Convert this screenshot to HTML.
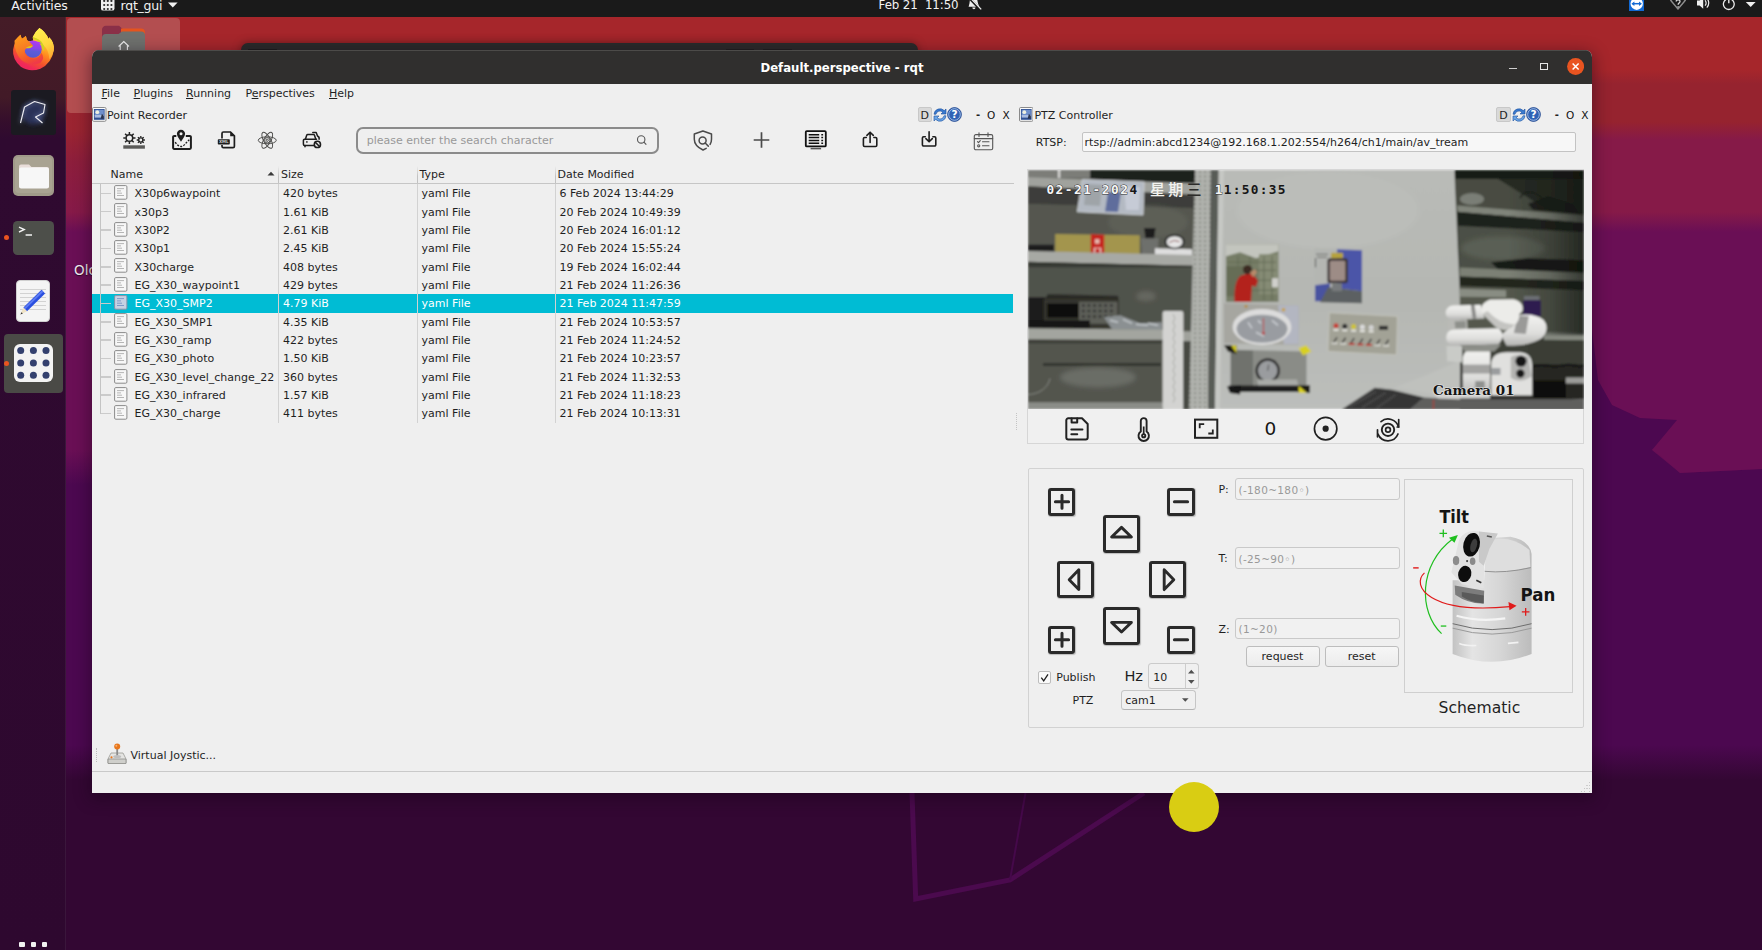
<!DOCTYPE html>
<html><head><meta charset="utf-8"><title>Default.perspective - rqt</title>
<style>
*{box-sizing:border-box;margin:0;padding:0}
html,body{width:1762px;height:950px;overflow:hidden;background:#330733}
body{position:relative;font-family:"DejaVu Sans","Liberation Sans",sans-serif;font-size:11px;color:#1f1f1f}
body div,body span,body svg{position:absolute}
.t{white-space:pre;line-height:14px;height:14px}
#wall{left:0;top:0;width:1762px;height:950px;
 background:linear-gradient(180deg,#a6262b 0px,#a6262b 70px,#96232f 84px,#96232f 122px,#861a48 140px,#861a48 212px,#6a0f55 232px,#6a0f55 450px,#4c0850 485px,#4c0850 745px,#330733 780px,#330733 950px)}
#topbar{left:0;top:0;width:1762px;height:16.6px;background:#1a1a1a;color:#f4f4f4;overflow:hidden}
#dock{left:0;top:16.6px;width:66px;height:934px;background:linear-gradient(180deg,#451c27 0,#421a27 80px,#350e2c 104px,#2f0a30 122px,#2e082f 100%)}
#win{left:92px;top:50px;width:1500px;height:743px;background:#efefef;border-radius:7px 7px 0 0;overflow:hidden}
#titlebar{left:0;top:0;width:1500px;height:33.8px;background:#302f2e;border-top:1px solid #4c4b49}
.hl{background:#00bcd4}
.inp{background:#f7f7f7;border:1px solid #c3c3c3;border-radius:2px}
.btn{background:linear-gradient(#f6f6f6,#ececec);border:1px solid #bdbdbd;border-radius:3px;text-align:center}
.ph{color:#999}
.kb{border:3px solid #2a2a2a;border-radius:3px;box-shadow:.5px .8px 1px rgba(0,0,0,.22)}
</style></head><body>
<div id="wall"></div>
<!-- left strip -->
<div style="left:66px;top:100px;width:30px;height:110px;background:linear-gradient(180deg,#9d2430 0,#9b2431 30px,#8d1e3c 62px,rgba(134,26,72,0) 110px)"></div>
<!-- right wallpaper facets -->
<svg style="left:1592px;top:330px" width="170" height="160" viewBox="0 0 170 160"><polygon points="0,0 6,50 20,75 48,88 85,90 60,120 88,143 170,139 170,160 0,160" fill="#4c0850"/><polygon points="60,119 170,119 170,139 88,143" fill="#6a0f55"/></svg>
<!-- desktop icon highlight + folder -->
<div style="left:66.800px;top:18px;width:113px;height:95.300px;background:#b34e50;border-radius:4px"></div>
<svg style="left:100px;top:24px" width="48" height="30" viewBox="0 0 48 30"><path d="M2 6a4 4 0 0 1 4-4.200h13l4 3.500H23V30H2z" fill="#8a3048"/><path d="M21 4.500h20a4 4 0 0 1 4 4V30H21z" fill="#e5541e"/><path d="M2 14a4 4 0 0 1 4-4h12.500l3.500-2.500H41a4 4 0 0 1 4 4V30H2z" fill="#6f716e"/><path d="M18.600 22.500l5.200-5 5.200 5M20.200 21.500V27M27.400 21.500V27" stroke="#f0f0f0" stroke-width="1.100" fill="none"/></svg>
<span class="t" style="left:74px;top:262px;font-size:13.500px;line-height:17px;height:17px;color:#f1eaf0;text-shadow:0 1px 1px rgba(0,0,0,.6)">Olc</span>
<!-- window behind -->
<div style="left:240.500px;top:42.800px;width:677px;height:20px;background:#2a2a2a;border-radius:7px 7px 0 0;box-shadow:0 0 10px rgba(0,0,0,.35)"></div>
<div style="left:248px;top:48.500px;width:29px;height:3px;background:#1d1d1d"></div>
<div style="left:726px;top:48.500px;width:28px;height:3px;background:#1f1f1f"></div>
<div style="left:763px;top:48.500px;width:29px;height:3px;background:#1f1f1f"></div>
<!-- wallpaper figure lines -->
<svg style="left:880px;top:780px" width="300" height="140" viewBox="0 0 300 140"><path d="M32 13L35.700 119 130 100 264 13" fill="none" stroke="#4b0a4e" stroke-width="5" stroke-linejoin="miter"/><path d="M145.500 13L130 100" stroke="#45094a" stroke-width="2" fill="none"/></svg>
<!-- window shadow -->
<div style="left:92px;top:50px;width:1500px;height:743px;border-radius:7px 7px 0 0;box-shadow:0 4px 16px 2px rgba(20,0,20,.42)"></div>

<div id="topbar"><span class="t" style="left:11.3px;top:-2.400px;font-size:12.5px;line-height:16px;height:16px;color:#f2f2f2;letter-spacing:-.05px">Activities</span>
<svg style="left:101px;top:-3px" width="14" height="14" viewBox="0 0 14 14"><rect x="0" y="0" width="13.5" height="13.6" rx="2.2" fill="#f0f0f0"/><g fill="#2a2a2a"><circle cx="3.2" cy="4" r="1.1"/><circle cx="6.8" cy="4" r="1.1"/><circle cx="10.4" cy="4" r="1.1"/><circle cx="3.2" cy="8" r="1.1"/><circle cx="6.8" cy="8" r="1.1"/><circle cx="10.4" cy="8" r="1.1"/><circle cx="3.2" cy="12" r="1.1"/><circle cx="6.8" cy="12" r="1.1"/><circle cx="10.4" cy="12" r="1.1"/></g></svg>
<span class="t" style="left:120.6px;top:-2.400px;font-size:12.5px;line-height:16px;height:16px;color:#f2f2f2;letter-spacing:-.25px">rqt_gui</span>
<svg style="left:167px;top:1px" width="12" height="8" viewBox="0 0 12 8"><path d="M1 1.400h9.600L5.800 6.600z" fill="#f0f0f0"/></svg>
<span class="t" style="left:878.6px;top:-3px;font-size:11.800px;line-height:16px;height:16px;color:#f2f2f2;letter-spacing:-.1px">Feb 21  11:50</span>
<svg style="left:966px;top:-3px" width="17" height="15" viewBox="0 0 17 15"><path d="M4.200 0h6.500c.6 3 1 6.500 2.600 9.800H2.600C3.800 6.500 3.800 3 4.200 0z" fill="#eeeeee"/><path d="M6.300 10.600a1.600 1.600 0 0 0 3.200 0z" fill="#eee"/><path d="M2.500 0l12 12.800" stroke="#1a1a1a" stroke-width="2.600"/><path d="M3.600 0l11.600 12.400" stroke="#eee" stroke-width="1.300"/></svg>
<!-- tray -->
<svg style="left:1629px;top:-4px" width="15.400" height="15.400" viewBox="0 0 15.400 15.400"><rect width="15.400" height="15.400" fill="#1269d3"/><circle cx="7.700" cy="7.700" r="6.200" fill="#fff"/><path d="M3.600 7.700h8.200" stroke="#1269d3" stroke-width="1.500" fill="none"/><path d="M2.400 7.700l3-2.300v4.600zM13 7.700l-3-2.300v4.600z" fill="#1269d3"/></svg>
<svg style="left:1669px;top:-5px" width="18" height="15" viewBox="0 0 18 15"><path d="M9 14L1.800 5.500C5.500 1.500 12.500 1.500 16.200 5.500z" fill="none" stroke="#8e8e8e" stroke-width="1.400"/><path d="M7.200 6.600c0-2.400 3.800-2.400 3.800-.2 0 1.600-1.900 1.600-1.900 3.300M9.100 11.300v1.300" stroke="#d8d8d8" stroke-width="1.300" fill="none"/></svg>
<svg style="left:1695px;top:-4px" width="17" height="14" viewBox="0 0 17 14"><path d="M2 4.600h2.600L8.200 1.200v11.600L4.600 9.400H2z" fill="#f0f0f0"/><path d="M10 4.300c1.500 1.500 1.500 3.900 0 5.400M11.800 2.400c2.600 2.600 2.600 6.600 0 9.200" stroke="#f0f0f0" stroke-width="1.200" fill="none"/></svg>
<svg style="left:1721px;top:-4px" width="16" height="15" viewBox="0 0 16 15"><path d="M5 3.500a5.400 5.400 0 1 0 5.600 0" stroke="#ededed" stroke-width="1.300" fill="none"/><path d="M7.800 0v7.200" stroke="#ededed" stroke-width="1.400"/></svg>
<svg style="left:1745px;top:1px" width="12" height="8" viewBox="0 0 12 8"><path d="M.800 .900h9.800L5.700 6.100z" fill="#f0f0f0"/></svg>
</div>
<div id="dock"><div style="left:65.300px;top:0;width:1px;height:934px;background:rgba(255,255,255,.06)"></div>
<!-- firefox -->
<svg style="left:10px;top:8.400px" width="48" height="48" viewBox="0 0 48 48">
<defs><linearGradient id="ffb" x1=".75" y1=".05" x2=".3" y2="1"><stop offset="0" stop-color="#ffe94a"/><stop offset=".28" stop-color="#ffc230"/><stop offset=".5" stop-color="#ff8a1f"/><stop offset=".72" stop-color="#f4502e"/><stop offset=".9" stop-color="#f0285a"/></linearGradient>
<linearGradient id="ffg" x1=".5" y1="0" x2=".4" y2="1"><stop offset="0" stop-color="#b03af2"/><stop offset=".45" stop-color="#8a44ea"/><stop offset=".6" stop-color="#5e5cd8"/><stop offset="1" stop-color="#5558d2"/></linearGradient>
<linearGradient id="ffs" x1=".2" y1="0" x2=".6" y2="1"><stop offset="0" stop-color="#ff9c1a"/><stop offset=".45" stop-color="#f77a25"/><stop offset=".8" stop-color="#f2552c"/><stop offset="1" stop-color="#f03a48"/></linearGradient>
<linearGradient id="fff" x1=".3" y1="0" x2=".7" y2="1"><stop offset="0" stop-color="#fff04f"/><stop offset=".6" stop-color="#ffd53e"/><stop offset="1" stop-color="#ffa834"/></linearGradient></defs>
<path d="M10.48 9.85Q4.48 15.85 3.09 24.69Q2.26 34.17 10.79 41.75Q19.64 47.43 30.38 43.64Q41.75 38.59 43.77 25.32Q44.59 17.74 39.22 12.37L38.59 13.95Q35.43 6.37 29.43 2.90Q25.32 6.37 22.80 12.06L23.11 15.85L17.11 16.16L16.79 14.27L15.85 11.11L13.00 13.45L11.74 13.64Z" fill="url(#ffb)"/>
<path d="M29.43 2.90Q35.43 6.37 38.59 13.95L39.22 12.37Q44.59 17.74 43.77 25.32Q43.01 30.38 39.22 34.17Q39.22 25.32 33.53 20.27Q30.38 15.85 22.80 12.06Q25.32 6.37 29.43 2.90Z" fill="url(#fff)"/>
<path d="M22.80 12.06Q30.38 13.95 32.90 19.01Q35.43 22.16 33.53 26.59Q31.64 21.53 30.38 19.01Q27.85 15.21 22.80 13.32Z" fill="#cfd420"/>
<circle cx="23.11" cy="24.19" r="8.600" fill="url(#ffg)"/>
<path d="M4.48 15.85Q7.63 12.06 10.48 9.85L11.74 13.64L15.85 11.11L16.79 14.58Q20.27 17.74 23.11 20.58Q22.16 22.80 17.11 23.11Q13.95 24.69 14.27 27.85Q15.85 32.90 23.43 33.66Q29.11 33.53 31.32 27.85Q35.43 32.90 30.38 37.96Q21.53 41.75 12.06 35.43Q4.48 29.11 4.48 15.85Z" fill="url(#ffs)"/>
<path d="M15.85 22.80Q20.27 20.27 22.80 20.90Q21.53 23.11 17.11 23.30Z" fill="#d8cc1c"/>
<path d="M27.22 16.48Q30.38 17.11 31.32 18.69Q29.43 18.06 27.85 18.69Z" fill="#b03af2"/>
</svg>
<!-- R icon -->
<div style="left:11px;top:73.400px;width:44.800px;height:44.600px;background:#1b1a21;border-radius:3px"></div>
<svg style="left:11px;top:73.400px" width="45" height="45" viewBox="0 0 45 45"><defs><filter id="gl" x="-30%" y="-30%" width="160%" height="160%"><feGaussianBlur stdDeviation="2.200"/></filter></defs><circle cx="22.500" cy="23" r="11.500" fill="#2c3358" filter="url(#gl)"/><path d="M9.500 33L13.500 17 23.500 11.500 34 14.500 32.500 23 24.500 27 31.500 33" fill="none" stroke="#8e9fd0" stroke-width="2.600" opacity=".4" filter="url(#gl)"/><path d="M9.500 33L13.500 17 23.500 11.500 34 14.500 32.500 23 24.500 27 31.500 33" fill="none" stroke="#ededf2" stroke-width="1.150" stroke-linejoin="round"/></svg>
<!-- files -->
<div style="left:12.600px;top:138.400px;width:41.800px;height:41.200px;background:#a09a89;border-radius:5px"></div>
<div style="left:14.600px;top:140.400px;width:37.800px;height:36px;background:#a9a392;border-radius:4px"></div>
<svg style="left:12.600px;top:138.400px" width="42" height="42" viewBox="0 0 42 42"><path d="M6 11.500a2 2 0 0 1 2-2h8l2.500 2.500H34a2 2 0 0 1 2 2V31a2 2 0 0 1-2 2H8a2 2 0 0 1-2-2z" fill="#e9ddd9"/><rect x="6" y="12.600" width="30" height="20.800" rx="2.200" fill="#f7f7f7"/></svg>
<!-- terminal -->
<div style="left:12.600px;top:204.400px;width:41.200px;height:34.200px;background:#4d4f4a;border-radius:4.500px"></div>
<svg style="left:12.600px;top:204.400px" width="42" height="35" viewBox="0 0 42 35"><path d="M6 6.200l5.200 2.400L6 11" stroke="#f4f4f4" stroke-width="1.400" fill="none"/><path d="M12.600 14h6.400" stroke="#f4f4f4" stroke-width="1.500"/></svg>
<div style="left:3.800px;top:218.800px;width:5px;height:5px;border-radius:50%;background:#e95420"></div>
<!-- text editor -->
<div style="left:16.400px;top:263.400px;width:33.800px;height:41.700px;background:#f4f4f4;border-radius:4px;border:.5px solid #cfcfcf"></div>
<svg style="left:16.400px;top:263.400px" width="34" height="42" viewBox="0 0 34 42"><path d="M4 9.500h26M4 13.500h26M4 17.500h26M4 21.500h26M4 25.500h26M4 29.500h26" stroke="#c9c9c9" stroke-width=".8"/><path d="M25.500 9.800l3.600 3.600L11 31.200l-3.600-3.600z" fill="#2a4fe0"/><path d="M26 10.300l1.400 1.400L9 29.600l-1.200-1.500z" fill="#5b7bf2"/><path d="M7.400 27.600l3.600 3.600-6.600 3.200z" fill="#efe2c4"/><path d="M5.500 32.200l1.400 1.300-2.500 1.100z" fill="#333"/></svg>
<!-- active app -->
<div style="left:3.600px;top:317.100px;width:59.200px;height:59px;background:#4a4a46;border-radius:4px"></div>
<div style="left:13.700px;top:327px;width:39.400px;height:38.600px;background:#f3f3f3;border-radius:6px"></div>
<svg style="left:13.700px;top:327px" width="40" height="39" viewBox="0 0 40 39"><g fill="#33406e"><circle cx="6.700" cy="6.500" r="3.500"/><circle cx="19.400" cy="6.500" r="3.500"/><circle cx="32" cy="6.500" r="3.500"/><circle cx="6.700" cy="18.900" r="3.500"/><circle cx="19.400" cy="18.900" r="3.500"/><circle cx="32" cy="18.900" r="3.500"/><circle cx="6.700" cy="31.200" r="3.500"/><circle cx="19.400" cy="31.200" r="3.500"/><circle cx="32" cy="31.200" r="3.500"/></g></svg>
<div style="left:3.800px;top:344.200px;width:5px;height:5px;border-radius:50%;background:#e95420"></div>
<!-- show apps -->
<div style="left:19.400px;top:925.200px;width:5.200px;height:5.200px;border-radius:1px;background:#f2f2f2"></div>
<div style="left:30.500px;top:925.200px;width:5.200px;height:5.200px;border-radius:1px;background:#f2f2f2"></div>
<div style="left:41.500px;top:925.200px;width:5.200px;height:5.200px;border-radius:1px;background:#f2f2f2"></div>
</div>
<div id="win"><div id="titlebar"></div></div>
<!-- window chrome -->
<span class="t" style="left:760px;top:61px;width:164px;text-align:center;color:#fff;font-weight:bold;font-size:11.7px">Default.perspective - rqt</span>
<div style="left:1509px;top:68px;width:8.2px;height:1.4px;background:#cfcfcf"></div>
<div style="left:1540.4px;top:62.9px;width:7.8px;height:7.6px;border:1.3px solid #e6e6e6"></div>
<svg style="left:1567px;top:58px" width="17" height="17" viewBox="0 0 17 17"><circle cx="8.6" cy="8.5" r="8.5" fill="#e95420"/><path d="M5.6 5.5l6 6M11.6 5.5l-6 6" stroke="#fff" stroke-width="1.5" fill="none"/></svg>
<!-- menubar -->
<span class="t" style="left:101.5px;top:86.8px"><u>F</u>ile</span>
<span class="t" style="left:133.6px;top:86.8px"><u>P</u>lugins</span>
<span class="t" style="left:186px;top:86.8px"><u>R</u>unning</span>
<span class="t" style="left:245.4px;top:86.8px">P<u>e</u>rspectives</span>
<span class="t" style="left:329px;top:86.8px"><u>H</u>elp</span>
<!-- bottom -->
<div style="left:92px;top:771px;width:1500px;height:1px;background:#c9c9c9"></div>
<span class="t" style="left:130.5px;top:749.2px">Virtual Joystic...</span>
<svg style="left:1578px;top:780px" width="14" height="13" viewBox="0 0 14 13"><g fill="#c6c6c6"><rect x="11" y="2" width="1" height="1"/><rect x="8.200" y="5" width="1.600" height="1"/><rect x="11" y="5" width="1" height="1"/><rect x="6" y="8" width="1" height="1"/><rect x="8.200" y="8" width="1.600" height="1"/><rect x="11" y="8" width="1" height="1"/><rect x="3" y="11" width="1" height="1"/><rect x="6" y="11" width="1" height="1"/><rect x="11" y="11" width="1" height="1"/></g></svg>

<!-- Point Recorder dock title -->
<svg style="left:92.300px;top:107.200px" width="14.500" height="14.800" viewBox="0 0 14.500 14.800"><rect x=".5" y=".5" width="13.500" height="13.800" rx="1.200" fill="#fbfbfb" stroke="#8a8a8a"/><rect x="1.900" y="2" width="10.700" height="10.800" fill="#2f4f93"/><rect x="2.700" y="2.800" width="9.100" height="6.200" fill="#6f8fcb"/><circle cx="5.300" cy="5.200" r="1.900" fill="#eef0e0"/><rect x="2.700" y="8" width="9.100" height="2.600" fill="#a9bce0"/><path d="M8.600 11.800l1.300-5 1.900 2.200v2.800z" fill="#2b3550"/></svg>
<span class="t" style="left:107px;top:109px">Point Recorder</span>
<div style="left:917.5px;top:107.3px;width:14.3px;height:14.6px;background:#d9d9d9;border:1px solid #c8c8c8;border-radius:2px"></div>
<span class="t" style="left:920.5px;top:109px;color:#222">D</span>
<svg style="left:933.0px;top:107.5px" width="14" height="14" viewBox="0 0 14 14"><path d="M1 6.2A6 6 0 0 1 11.3 2.6L13 1v5H8l1.8-1.8A4 4 0 0 0 3 6.2z" fill="#3a7bd0" stroke="#1c4f9c" stroke-width=".6"/><path d="M13 7.8A6 6 0 0 1 2.7 11.4L1 13V8h5L4.2 9.8A4 4 0 0 0 11 7.8z" fill="#6aa6e8" stroke="#1c4f9c" stroke-width=".6"/></svg>
<svg style="left:946.8px;top:107.2px" width="15" height="15" viewBox="0 0 15 15"><circle cx="7.5" cy="7.5" r="6.9" fill="#2f62b5" stroke="#1d428a" stroke-width=".8"/><circle cx="7.5" cy="7.5" r="5.8" fill="none" stroke="#cfe0f7" stroke-width=".7"/><text x="7.5" y="11.3" font-size="10.5" font-weight="bold" fill="#fff" text-anchor="middle" font-family="DejaVu Sans,Liberation Sans,sans-serif">?</text></svg>
<span class="t" style="left:976.0px;top:108.400px;font-weight:bold;font-size:10px;color:#222">-</span>
<span class="t" style="left:987.1px;top:108.400px;font-size:10.5px;color:#111">O</span>
<span class="t" style="left:1002.5px;top:108.400px;font-size:10.5px;color:#111">X</span>
<div style="left:355.6px;top:126.7px;width:303.8px;height:27px;border:2px solid #8b8b8b;border-radius:7px;background:#efefef"></div>
<span class="t ph" style="left:366.7px;top:134.2px">please enter the search character</span>
<svg style="left:636px;top:134px" width="12" height="12" viewBox="0 0 12 12"><circle cx="5.2" cy="5.4" r="3.7" fill="none" stroke="#555" stroke-width="1.1"/><path d="M7.9 8.2l2.4 2.4" stroke="#555" stroke-width="1.2"/></svg>
<span class="t" style="left:110.6px;top:168px">Name</span>
<span class="t" style="left:281px;top:168px">Size</span>
<span class="t" style="left:419.6px;top:168px">Type</span>
<span class="t" style="left:557.6px;top:168px">Date Modified</span>
<svg style="left:267px;top:171px" width="8" height="5" viewBox="0 0 8 5"><path d="M0.5 4.5L4 0.8 7.5 4.5z" fill="#3a3a3a"/></svg>
<div style="left:92px;top:182.6px;width:921.5px;height:1px;background:#c6c6c6"></div>
<div style="left:278.4px;top:166px;width:1px;height:17px;background:linear-gradient(#efefef,#c2c2c2 60%)"></div>
<div style="left:417px;top:166px;width:1px;height:17px;background:linear-gradient(#efefef,#c2c2c2 60%)"></div>
<div style="left:555.4px;top:166px;width:1px;height:17px;background:linear-gradient(#efefef,#c2c2c2 60%)"></div>
<div class="hl" style="left:92px;top:294.20px;width:921.3px;height:18.35px"></div>
<div style="left:278.4px;top:183.5px;width:1px;height:239.6px;background:#d2d2d2"></div>
<div style="left:417px;top:183.5px;width:1px;height:239.6px;background:#d2d2d2"></div>
<div style="left:555.4px;top:183.5px;width:1px;height:239.6px;background:#d2d2d2"></div>
<div style="left:100.200px;top:184px;width:1px;height:229.7px;background:#c4c4c4"></div>
<div style="left:100.700px;top:192.60px;width:10px;height:1.500px;background:#cbcbcb"></div>
<svg style="left:114px;top:185.00px" width="14" height="15" viewBox="0 0 14 15"><rect x=".6" y=".6" width="12.3" height="13.6" rx="1.2" fill="#f7f7f7" stroke="#8a8a8a" stroke-width="1"/><path d="M3 3.6h7M3 5.9h4M3 8.2h5M3 10.5h7" stroke="#b5b5b5" stroke-width="1"/></svg>
<span class="t" style="left:134.6px;top:187.20px">X30p6waypoint</span>
<span class="t" style="left:283px;top:187.20px">420 bytes</span>
<span class="t" style="left:421.6px;top:187.20px">yaml File</span>
<span class="t" style="left:559.4px;top:187.20px">6 Feb 2024 13:44:29</span>
<div style="left:100.700px;top:210.95px;width:10px;height:1.500px;background:#cbcbcb"></div>
<svg style="left:114px;top:203.35px" width="14" height="15" viewBox="0 0 14 15"><rect x=".6" y=".6" width="12.3" height="13.6" rx="1.2" fill="#f7f7f7" stroke="#8a8a8a" stroke-width="1"/><path d="M3 3.6h7M3 5.9h4M3 8.2h5M3 10.5h7" stroke="#b5b5b5" stroke-width="1"/></svg>
<span class="t" style="left:134.6px;top:205.55px">x30p3</span>
<span class="t" style="left:283px;top:205.55px">1.61 KiB</span>
<span class="t" style="left:421.6px;top:205.55px">yaml File</span>
<span class="t" style="left:559.4px;top:205.55px">20 Feb 2024 10:49:39</span>
<div style="left:100.700px;top:229.30px;width:10px;height:1.500px;background:#cbcbcb"></div>
<svg style="left:114px;top:221.70px" width="14" height="15" viewBox="0 0 14 15"><rect x=".6" y=".6" width="12.3" height="13.6" rx="1.2" fill="#f7f7f7" stroke="#8a8a8a" stroke-width="1"/><path d="M3 3.6h7M3 5.9h4M3 8.2h5M3 10.5h7" stroke="#b5b5b5" stroke-width="1"/></svg>
<span class="t" style="left:134.6px;top:223.90px">X30P2</span>
<span class="t" style="left:283px;top:223.90px">2.61 KiB</span>
<span class="t" style="left:421.6px;top:223.90px">yaml File</span>
<span class="t" style="left:559.4px;top:223.90px">20 Feb 2024 16:01:12</span>
<div style="left:100.700px;top:247.65px;width:10px;height:1.500px;background:#cbcbcb"></div>
<svg style="left:114px;top:240.05px" width="14" height="15" viewBox="0 0 14 15"><rect x=".6" y=".6" width="12.3" height="13.6" rx="1.2" fill="#f7f7f7" stroke="#8a8a8a" stroke-width="1"/><path d="M3 3.6h7M3 5.9h4M3 8.2h5M3 10.5h7" stroke="#b5b5b5" stroke-width="1"/></svg>
<span class="t" style="left:134.6px;top:242.25px">X30p1</span>
<span class="t" style="left:283px;top:242.25px">2.45 KiB</span>
<span class="t" style="left:421.6px;top:242.25px">yaml File</span>
<span class="t" style="left:559.4px;top:242.25px">20 Feb 2024 15:55:24</span>
<div style="left:100.700px;top:266.00px;width:10px;height:1.500px;background:#cbcbcb"></div>
<svg style="left:114px;top:258.40px" width="14" height="15" viewBox="0 0 14 15"><rect x=".6" y=".6" width="12.3" height="13.6" rx="1.2" fill="#f7f7f7" stroke="#8a8a8a" stroke-width="1"/><path d="M3 3.6h7M3 5.9h4M3 8.2h5M3 10.5h7" stroke="#b5b5b5" stroke-width="1"/></svg>
<span class="t" style="left:134.6px;top:260.60px">X30charge</span>
<span class="t" style="left:283px;top:260.60px">408 bytes</span>
<span class="t" style="left:421.6px;top:260.60px">yaml File</span>
<span class="t" style="left:559.4px;top:260.60px">19 Feb 2024 16:02:44</span>
<div style="left:100.700px;top:284.35px;width:10px;height:1.500px;background:#cbcbcb"></div>
<svg style="left:114px;top:276.75px" width="14" height="15" viewBox="0 0 14 15"><rect x=".6" y=".6" width="12.3" height="13.6" rx="1.2" fill="#f7f7f7" stroke="#8a8a8a" stroke-width="1"/><path d="M3 3.6h7M3 5.9h4M3 8.2h5M3 10.5h7" stroke="#b5b5b5" stroke-width="1"/></svg>
<span class="t" style="left:134.6px;top:278.95px">EG_X30_waypoint1</span>
<span class="t" style="left:283px;top:278.95px">429 bytes</span>
<span class="t" style="left:421.6px;top:278.95px">yaml File</span>
<span class="t" style="left:559.4px;top:278.95px">21 Feb 2024 11:26:36</span>
<div style="left:100.700px;top:302.70px;width:10px;height:1.500px;background:#cbcbcb"></div>
<svg style="left:114px;top:295.10px" width="14" height="15" viewBox="0 0 14 15"><rect x=".6" y=".6" width="12.3" height="13.6" rx="1.2" fill="#c6d2e3" stroke="#8590a6" stroke-width="1"/><path d="M3 3.6h7M3 5.9h4M3 8.2h5M3 10.5h7" stroke="#7f9ac9" stroke-width="1"/></svg>
<span class="t" style="color:#fff;left:134.6px;top:297.30px">EG_X30_SMP2</span>
<span class="t" style="color:#fff;left:283px;top:297.30px">4.79 KiB</span>
<span class="t" style="color:#fff;left:421.6px;top:297.30px">yaml File</span>
<span class="t" style="color:#fff;left:559.4px;top:297.30px">21 Feb 2024 11:47:59</span>
<div style="left:100.700px;top:321.05px;width:10px;height:1.500px;background:#cbcbcb"></div>
<svg style="left:114px;top:313.45px" width="14" height="15" viewBox="0 0 14 15"><rect x=".6" y=".6" width="12.3" height="13.6" rx="1.2" fill="#f7f7f7" stroke="#8a8a8a" stroke-width="1"/><path d="M3 3.6h7M3 5.9h4M3 8.2h5M3 10.5h7" stroke="#b5b5b5" stroke-width="1"/></svg>
<span class="t" style="left:134.6px;top:315.65px">EG_X30_SMP1</span>
<span class="t" style="left:283px;top:315.65px">4.35 KiB</span>
<span class="t" style="left:421.6px;top:315.65px">yaml File</span>
<span class="t" style="left:559.4px;top:315.65px">21 Feb 2024 10:53:57</span>
<div style="left:100.700px;top:339.40px;width:10px;height:1.500px;background:#cbcbcb"></div>
<svg style="left:114px;top:331.80px" width="14" height="15" viewBox="0 0 14 15"><rect x=".6" y=".6" width="12.3" height="13.6" rx="1.2" fill="#f7f7f7" stroke="#8a8a8a" stroke-width="1"/><path d="M3 3.6h7M3 5.9h4M3 8.2h5M3 10.5h7" stroke="#b5b5b5" stroke-width="1"/></svg>
<span class="t" style="left:134.6px;top:334.00px">EG_X30_ramp</span>
<span class="t" style="left:283px;top:334.00px">422 bytes</span>
<span class="t" style="left:421.6px;top:334.00px">yaml File</span>
<span class="t" style="left:559.4px;top:334.00px">21 Feb 2024 11:24:52</span>
<div style="left:100.700px;top:357.75px;width:10px;height:1.500px;background:#cbcbcb"></div>
<svg style="left:114px;top:350.15px" width="14" height="15" viewBox="0 0 14 15"><rect x=".6" y=".6" width="12.3" height="13.6" rx="1.2" fill="#f7f7f7" stroke="#8a8a8a" stroke-width="1"/><path d="M3 3.6h7M3 5.9h4M3 8.2h5M3 10.5h7" stroke="#b5b5b5" stroke-width="1"/></svg>
<span class="t" style="left:134.6px;top:352.35px">EG_X30_photo</span>
<span class="t" style="left:283px;top:352.35px">1.50 KiB</span>
<span class="t" style="left:421.6px;top:352.35px">yaml File</span>
<span class="t" style="left:559.4px;top:352.35px">21 Feb 2024 10:23:57</span>
<div style="left:100.700px;top:376.10px;width:10px;height:1.500px;background:#cbcbcb"></div>
<svg style="left:114px;top:368.50px" width="14" height="15" viewBox="0 0 14 15"><rect x=".6" y=".6" width="12.3" height="13.6" rx="1.2" fill="#f7f7f7" stroke="#8a8a8a" stroke-width="1"/><path d="M3 3.6h7M3 5.9h4M3 8.2h5M3 10.5h7" stroke="#b5b5b5" stroke-width="1"/></svg>
<span class="t" style="left:134.6px;top:370.70px">EG_X30_level_change_22</span>
<span class="t" style="left:283px;top:370.70px">360 bytes</span>
<span class="t" style="left:421.6px;top:370.70px">yaml File</span>
<span class="t" style="left:559.4px;top:370.70px">21 Feb 2024 11:32:53</span>
<div style="left:100.700px;top:394.45px;width:10px;height:1.500px;background:#cbcbcb"></div>
<svg style="left:114px;top:386.85px" width="14" height="15" viewBox="0 0 14 15"><rect x=".6" y=".6" width="12.3" height="13.6" rx="1.2" fill="#f7f7f7" stroke="#8a8a8a" stroke-width="1"/><path d="M3 3.6h7M3 5.9h4M3 8.2h5M3 10.5h7" stroke="#b5b5b5" stroke-width="1"/></svg>
<span class="t" style="left:134.6px;top:389.05px">EG_X30_infrared</span>
<span class="t" style="left:283px;top:389.05px">1.57 KiB</span>
<span class="t" style="left:421.6px;top:389.05px">yaml File</span>
<span class="t" style="left:559.4px;top:389.05px">21 Feb 2024 11:18:23</span>
<div style="left:100.700px;top:412.80px;width:10px;height:1.500px;background:#cbcbcb"></div>
<svg style="left:114px;top:405.20px" width="14" height="15" viewBox="0 0 14 15"><rect x=".6" y=".6" width="12.3" height="13.6" rx="1.2" fill="#f7f7f7" stroke="#8a8a8a" stroke-width="1"/><path d="M3 3.6h7M3 5.9h4M3 8.2h5M3 10.5h7" stroke="#b5b5b5" stroke-width="1"/></svg>
<span class="t" style="left:134.6px;top:407.40px">EG_X30_charge</span>
<span class="t" style="left:283px;top:407.40px">411 bytes</span>
<span class="t" style="left:421.6px;top:407.40px">yaml File</span>
<span class="t" style="left:559.4px;top:407.40px">21 Feb 2024 10:13:31</span>
<svg style="left:106px;top:742px" width="23" height="24" viewBox="0 0 23 24"><path d="M2 17l3-6h12l3 6v4H2z" fill="#e4e4e2" stroke="#9a9a96" stroke-width=".8"/><path d="M2 17h18v4.5H2z" fill="#cfcfcb" stroke="#8e8e8a" stroke-width=".8"/><rect x="10.3" y="5" width="1.8" height="9" fill="#8a8a8a"/><ellipse cx="11.2" cy="14.5" rx="4" ry="1.6" fill="#bdbdbd"/><circle cx="11.2" cy="4.6" r="3" fill="#e8761c"/><circle cx="10.3" cy="3.7" r="1" fill="#f7b070"/><circle cx="5.5" cy="15.3" r="1.1" fill="#e8761c"/></svg>
<div style="left:95.5px;top:748px;width:1px;height:14px;border-left:1px dotted #bdbdbd"></div>
<svg style="left:120px;top:128px" width="28" height="24" viewBox="0 0 28 24"><circle cx="9.4" cy="10" r="3.3" fill="none" stroke="#222" stroke-width="1.5"/><path d="M9.40 6.40L9.40 3.90M11.95 7.45L13.71 5.69M13.00 10.00L15.50 10.00M11.95 12.55L13.71 14.31M9.40 13.60L9.40 16.10M6.85 12.55L5.09 14.31M5.80 10.00L3.30 10.00M6.85 7.45L5.09 5.69" stroke="#222" stroke-width="1.5" fill="none"/><circle cx="20.8" cy="12" r="2.1" fill="none" stroke="#222" stroke-width="1.4"/><path d="M20.80 9.60L20.80 7.90M22.50 10.30L23.70 9.10M23.20 12.00L24.90 12.00M22.50 13.70L23.70 14.90M20.80 14.40L20.80 16.10M19.10 13.70L17.90 14.90M18.40 12.00L16.70 12.00M19.10 10.30L17.90 9.10" stroke="#222" stroke-width="1.3" fill="none"/><rect x="3.3" y="17.3" width="21.6" height="3.4" fill="#5b5b59"/></svg>
<svg style="left:170px;top:127px" width="24" height="25" viewBox="0 0 24 25"><path d="M6.3 8.9H4.2a1.1 1.1 0 0 0-1.1 1.1V20.8a1.1 1.1 0 0 0 1.1 1.1H19.8a1.1 1.1 0 0 0 1.1-1.1V10a1.1 1.1 0 0 0-1.1-1.1H15.8" fill="none" stroke="#1d1d1d" stroke-width="2"/><path d="M11 2.8c-2.3 0-4.1 1.8-4.1 4 0 2.6 2.6 5.200 4.1 8 1.5-2.800 4.1-5.400 4.100-8 0-2.200-1.800-4-4.100-4z" fill="#1d1d1d"/><circle cx="11" cy="6.700" r="1.500" fill="#efefef"/><path d="M5.200 15.200c1.500 2.400 3.600 4.300 5.800 4.300 3.300 0 5.200-4.600 8.300-6.600" fill="none" stroke="#1d1d1d" stroke-width="1.300" stroke-dasharray="2 1.300"/></svg>
<svg style="left:215px;top:128px" width="24" height="24" viewBox="0 0 24 24"><path d="M7 10.5V5.400a1.400 1.400 0 0 1 1.400-1.400H15.500L19.400 7.900V18.300a1.400 1.400 0 0 1-1.400 1.400H8.400A1.400 1.400 0 0 1 7 18.300V17" fill="none" stroke="#1d1d1d" stroke-width="1.700"/><path d="M15.200 3.800l4.400 4.400h-4.400z" fill="#1d1d1d"/><rect x="2.800" y="11.200" width="12" height="5.300" rx=".8" fill="#1d1d1d"/><text x="8.800" y="15.300" font-size="4" font-weight="bold" fill="#cfcfcf" text-anchor="middle" font-family="DejaVu Sans,Liberation Sans,sans-serif">XML</text></svg>
<svg style="left:255px;top:128px" width="25" height="25" viewBox="0 0 25 25"><g fill="none" stroke="#4a4a48" stroke-width=".95"><ellipse cx="12.250" cy="12.300" rx="9" ry="3.500"/><ellipse cx="12.250" cy="12.300" rx="9" ry="3.500" transform="rotate(60 12.250 12.300)"/><ellipse cx="12.250" cy="12.300" rx="9" ry="3.500" transform="rotate(120 12.250 12.300)"/><circle cx="12.250" cy="12.300" r="2.700"/><circle cx="12.250" cy="12.300" r="1.100"/></g></svg>
<svg style="left:300px;top:128px" width="26" height="24" viewBox="0 0 26 24"><g fill="none" stroke="#1d1d1d" stroke-width="1.500" stroke-linejoin="round" stroke-linecap="round"><path d="M5.400 11.300L6.700 7.300a1.200 1.200 0 0 1 1.100-.8H13.400a1.200 1.200 0 0 1 1.100.8L15.800 11.300"/><path d="M13.800 17.500H4.600a1.200 1.200 0 0 1-1.200-1.200V12.500a1.200 1.200 0 0 1 1.200-1.200H16.500"/><path d="M5 17.600v1.200M12.800 4.500h3.400l1.300 3.500c1.500 .7 1.900 1.800 1.600 3.200"/><circle cx="17.400" cy="16.400" r="3.100" stroke-width="1.600"/><path d="M15.300 14.300l4.200 4.200" stroke-width="1.600"/></g><rect x="6" y="13.300" width="1.700" height="1.300" fill="#1d1d1d"/></svg>
<svg style="left:690px;top:127px" width="26" height="27" viewBox="0 0 26 27"><g fill="none" stroke="#4a4a4a" stroke-width="1.500" stroke-linejoin="round" stroke-linecap="round"><path d="M16.200 21.300L13 23 C8 20.600 4.300 17.300 4.300 12.200V7L12.900 4l8.600 3v5.200c0 2-.5 3.700-1.400 5.200"/><circle cx="12.600" cy="13.400" r="3.500"/><path d="M15.200 16l3.100 3.100"/></g></svg>
<svg style="left:750px;top:128px" width="24" height="24" viewBox="0 0 24 24"><path d="M11.500 4.200V19.700M3.700 12H19.300" stroke="#4a4a4a" stroke-width="1.700" fill="none"/></svg>
<svg style="left:802px;top:127px" width="28" height="26" viewBox="0 0 28 26"><rect x="3.800" y="4.100" width="20" height="15.300" rx="1" fill="none" stroke="#111" stroke-width="1.800"/><path d="M6.700 7.800h10.500M6.700 10.600h10.500M6.700 13.400h10.500M6.700 16.200h10.500" stroke="#111" stroke-width="1.500"/><path d="M19.300 7.800h1.800M19.300 10.600h1.800M19.300 13.400h1.800M19.300 16.200h1.800" stroke="#111" stroke-width="1.500"/><path d="M8.600 21.600h10.500" stroke="#555" stroke-width="1.500"/></svg>
<svg style="left:858px;top:128px" width="24" height="24" viewBox="0 0 24 24"><g fill="none" stroke="#1d1d1d" stroke-width="1.600" stroke-linejoin="round" stroke-linecap="round"><path d="M8.300 9.500H6.600a1.200 1.200 0 0 0-1.200 1.200V17.300a1.200 1.200 0 0 0 1.200 1.200H17.600a1.200 1.200 0 0 0 1.200-1.200V10.700a1.200 1.200 0 0 0-1.200-1.200H15.900"/><path d="M12.100 14.500V4.500M8.900 7.400l3.200-3.200 3.200 3.200"/></g></svg>
<svg style="left:917px;top:128px" width="24" height="24" viewBox="0 0 24 24"><g fill="none" stroke="#1d1d1d" stroke-width="1.600" stroke-linejoin="round" stroke-linecap="round"><path d="M8.300 8.800H6.600a1.200 1.200 0 0 0-1.200 1.200V16.800a1.200 1.200 0 0 0 1.200 1.200H17.600a1.200 1.200 0 0 0 1.200-1.200V10a1.200 1.200 0 0 0-1.200-1.200H15.900"/><path d="M12.100 3.800V13.500M8.900 10.600l3.200 3.200 3.200-3.200"/></g></svg>
<svg style="left:971px;top:129px" width="26" height="25" viewBox="0 0 26 25"><g fill="none" stroke="#555" stroke-width="1.100" stroke-linejoin="round" stroke-linecap="round"><rect x="3.300" y="5.600" width="18.400" height="15.200" rx="1.500"/><path d="M8 3.800v3.600M17 3.800v3.600M3.300 9.600h18.400M11.500 12.800h6.500M11.500 16.800h6.500M6.500 12.700l1 1 1.800-2"/><circle cx="7.700" cy="16.800" r="1.100"/></g></svg>
<!-- PTZ Controller dock -->
<svg style="left:1018.800px;top:107.200px" width="14.500" height="14.800" viewBox="0 0 14.500 14.800"><rect x=".5" y=".5" width="13.500" height="13.800" rx="1.200" fill="#fbfbfb" stroke="#8a8a8a"/><rect x="1.900" y="2" width="10.700" height="10.800" fill="#2f4f93"/><rect x="2.700" y="2.800" width="9.100" height="6.200" fill="#6f8fcb"/><circle cx="5.300" cy="5.200" r="1.900" fill="#eef0e0"/><rect x="2.700" y="8" width="9.100" height="2.600" fill="#a9bce0"/><path d="M8.600 11.800l1.300-5 1.900 2.200v2.800z" fill="#2b3550"/></svg>
<span class="t" style="left:1034.4px;top:109px">PTZ Controller</span>
<div style="left:1496.3px;top:107.3px;width:14.3px;height:14.6px;background:#d9d9d9;border:1px solid #c8c8c8;border-radius:2px"></div>
<span class="t" style="left:1499.3px;top:109px;color:#222">D</span>
<svg style="left:1511.8px;top:107.5px" width="14" height="14" viewBox="0 0 14 14"><path d="M1 6.2A6 6 0 0 1 11.3 2.6L13 1v5H8l1.8-1.8A4 4 0 0 0 3 6.2z" fill="#3a7bd0" stroke="#1c4f9c" stroke-width=".6"/><path d="M13 7.8A6 6 0 0 1 2.7 11.4L1 13V8h5L4.2 9.8A4 4 0 0 0 11 7.8z" fill="#6aa6e8" stroke="#1c4f9c" stroke-width=".6"/></svg>
<svg style="left:1525.6px;top:107.2px" width="15" height="15" viewBox="0 0 15 15"><circle cx="7.5" cy="7.5" r="6.9" fill="#2f62b5" stroke="#1d428a" stroke-width=".8"/><circle cx="7.5" cy="7.5" r="5.8" fill="none" stroke="#cfe0f7" stroke-width=".7"/><text x="7.5" y="11.3" font-size="10.5" font-weight="bold" fill="#fff" text-anchor="middle" font-family="DejaVu Sans,Liberation Sans,sans-serif">?</text></svg>
<span class="t" style="left:1554.8px;top:108.400px;font-weight:bold;font-size:10px;color:#222">-</span>
<span class="t" style="left:1565.8999999999999px;top:108.400px;font-size:10.5px;color:#111">O</span>
<span class="t" style="left:1581.3px;top:108.400px;font-size:10.5px;color:#111">X</span>
<span class="t" style="left:1035.8px;top:135.700px">RTSP:</span>
<div class="inp" style="left:1081.6px;top:131.8px;width:494px;height:20.4px"></div>
<span class="t" style="left:1084.6px;top:135.700px">rtsp://admin:abcd1234@192.168.1.202:554/h264/ch1/main/av_tream</span>
<div style="left:1027.4px;top:169.4px;width:557px;height:274.6px;border:1px solid #d6d6d6;background:#f0f0f0"></div>
<svg style="left:1028px;top:169.7px" width="556" height="239" viewBox="0 0 556 238.5" preserveAspectRatio="none">
<defs><filter id="bl" x="-2%" y="-2%" width="104%" height="104%"><feGaussianBlur stdDeviation="0.85"/></filter><filter id="bl2" x="-30%" y="-30%" width="160%" height="160%"><feGaussianBlur stdDeviation="2.2"/></filter><linearGradient id="wallg" x1="0" y1="0" x2="0" y2="1"><stop offset="0" stop-color="#b9bbb7"/><stop offset=".55" stop-color="#b5b7b3"/><stop offset="1" stop-color="#bcbebb"/></linearGradient><linearGradient id="armg" x1="0" y1="0" x2="0" y2="1"><stop offset="0" stop-color="#f2f2f0"/><stop offset=".6" stop-color="#dededc"/><stop offset="1" stop-color="#b4b4b2"/></linearGradient><pattern id="dots" width="5" height="4.6" patternUnits="userSpaceOnUse"><rect width="5" height="4.6" fill="#b0b2ad"/><rect x="1.2" y="1.2" width="1.7" height="1.5" fill="#74766f"/></pattern><linearGradient id="vg" x1="0" y1="0" x2="1" y2="0"><stop offset="0" stop-color="#0c100c" stop-opacity="0"/><stop offset=".55" stop-color="#0c100c" stop-opacity=".22"/><stop offset="1" stop-color="#0c100c" stop-opacity=".62"/></linearGradient><clipPath id="cc"><rect width="556" height="238.5"/></clipPath></defs>
<g clip-path="url(#cc)"><g filter="url(#bl)">
<rect x="0" y="0" width="200" height="238.5" fill="#54564f"/>
<rect x="0" y="0" width="62" height="8" fill="#7b7d78"/><rect x="30" y="0" width="2.2" height="8" fill="#d8d8d6"/>
<polygon points="62,0 170,0 170,13.8 62,9.6" fill="#1d201e"/>
<polygon points="0,7.2 168,13.5 168,25 0,16.2" fill="#a0a29d"/>
<polygon points="0,16.2 168,25 168,39 0,34" fill="#3c3e3a"/>
<polygon points="0,34 168,38 168,84 0,82" fill="#55574f"/>
<ellipse cx="120" cy="52" rx="40" ry="16" fill="#5d5f56" filter="url(#bl2)"/>
<polygon points="54.3,9.5 116.2,12 115,44.9 49.3,41.7" fill="#b3b9c2" stroke="#d5d7da" stroke-width=".8"/>
<polygon points="80,22 93,22 90,42 77,41.5" fill="#5e6d9c"/><polygon points="58,14 74,15 72,36 56,35" fill="#9fa4a8"/><polygon points="96,16 112,17 111,40 98,40" fill="#c6cbd6"/>
<rect x="0" y="74.5" width="26" height="6.6" fill="#1b1b1b"/>
<polygon points="27.2,63.8 111.8,65.2 111.8,84.6 27.2,82.6" fill="#a3954e"/>
<polygon points="62.8,64.2 76.2,64.6 76.2,84 62.8,83.6" fill="#c5201d"/>
<rect x="67" y="69" width="4.5" height="4.5" fill="#e8b9b0"/><rect x="66.5" y="78" width="6" height="5.5" fill="none" stroke="#f0d8d0" stroke-width="1"/>
<polygon points="116,58 127.6,58 126,69 117.5,69" fill="#1e1e1e"/>
<polygon points="112.8,68.2 130.8,68.2 129.6,85 114,85" fill="#6e706c"/>
<polygon points="127,78 164.2,79 164.2,86.4 127,85.2" fill="#dedede"/>
<ellipse cx="146.6" cy="71.6" rx="10.1" ry="7.6" fill="#2a2c2a"/><ellipse cx="146.6" cy="71.8" rx="8" ry="5.8" fill="#e6e6e6"/><path d="M141 72.5l5-2.2 5.5 1.2" stroke="#7a3a3a" stroke-width=".9" fill="none"/>
<polygon points="0,80.9 166,84.8 166,95.6 0,91.6" fill="#a7a9a4"/>
<polygon points="0,91.6 166,95.6 166,101 0,97" fill="#363830"/>
<rect x="0" y="97" width="166" height="62" fill="#50524b"/>
<ellipse cx="118" cy="126" rx="10" ry="5" fill="#666860" filter="url(#bl2)"/>
<rect x="0" y="127" width="17" height="31" fill="#1c1c1c"/>
<polygon points="20,123.8 90,125.5 91,131 15.8,130" fill="#2a2c28"/>
<rect x="15.8" y="129" width="75.2" height="29" fill="#34362f"/>
<rect x="19" y="133.3" width="31.5" height="14" fill="#0c0c0c"/>
<rect x="51" y="131.5" width="38.5" height="22" fill="#5d5f58"/>
<rect x="54" y="134" width="2.6" height="2.4" fill="#303230"/>
<rect x="54" y="139.5" width="2.6" height="2.4" fill="#303230"/>
<rect x="54" y="145" width="2.6" height="2.4" fill="#303230"/>
<rect x="59.6" y="134" width="2.6" height="2.4" fill="#303230"/>
<rect x="59.6" y="139.5" width="2.6" height="2.4" fill="#303230"/>
<rect x="59.6" y="145" width="2.6" height="2.4" fill="#303230"/>
<rect x="65.2" y="134" width="2.6" height="2.4" fill="#303230"/>
<rect x="65.2" y="139.5" width="2.6" height="2.4" fill="#303230"/>
<rect x="65.2" y="145" width="2.6" height="2.4" fill="#303230"/>
<rect x="70.8" y="134" width="2.6" height="2.4" fill="#303230"/>
<rect x="70.8" y="139.5" width="2.6" height="2.4" fill="#303230"/>
<rect x="70.8" y="145" width="2.6" height="2.4" fill="#303230"/>
<rect x="76.4" y="134" width="2.6" height="2.4" fill="#303230"/>
<rect x="76.4" y="139.5" width="2.6" height="2.4" fill="#303230"/>
<rect x="76.4" y="145" width="2.6" height="2.4" fill="#303230"/>
<rect x="82" y="134" width="2.6" height="2.4" fill="#303230"/>
<rect x="82" y="139.5" width="2.6" height="2.4" fill="#303230"/>
<rect x="82" y="145" width="2.6" height="2.4" fill="#303230"/>
<rect x="0" y="150" width="62" height="8" fill="#161616"/>
<polygon points="76,147 92,145 112,153 134,152 134,160 84,159" fill="#8b9092"/>
<path d="M82 150l8 2M95 149l9 4M108 154l12 1M120 153l10 2" stroke="#c4c9cc" stroke-width="1.5"/>
<polygon points="0,158 135,159.5 135,170 0,169" fill="#a3a59f"/>
<rect x="155" y="161" width="10.5" height="10" fill="#a0a29c"/>
<rect x="0" y="169.5" width="135" height="4" fill="#3c3e37"/>
<rect x="0" y="173" width="135" height="60" fill="#53554e"/>
<rect x="15" y="192.8" width="118" height="2.6" fill="#2f312b"/>
<ellipse cx="70" cy="207" rx="38" ry="10" fill="#6b6d66" filter="url(#bl2)"/>
<path d="M0 224c10 0 20-6 22-16" stroke="#8a8c86" stroke-width=".9" fill="none"/>
<rect x="0" y="231.8" width="135" height="7" fill="#8b8d88"/>
<rect x="134.6" y="140.8" width="20.8" height="98" rx="2" fill="#d3d3d1"/>
<path d="M145 144l2 4-2 4 2 4-2 4 2 4-2 4 2 4-2 4 2 4-2 4 2 4-2 4 2 4-2 4 2 4-2 4 2 4-2 4 2 4-2 4 2 4-2 4" stroke="#aeb0ac" stroke-width="1" fill="none"/>
<rect x="155.4" y="171" width="8" height="68" fill="#474943"/>
<polygon points="167,0 183,0 180,238.5 161,238.5" fill="url(#dots)"/>
<polygon points="183,0 190.8,0 187,238.5 180,238.5" fill="#595b56"/>
<polygon points="186,0 190.8,0 187,238.5 183.5,238.5" fill="#76787300"/>
<polygon points="190.8,0 426.3,0 432,130 432,238.5 187,238.5" fill="url(#wallg)"/>
<ellipse cx="300" cy="40" rx="90" ry="38" fill="#bbbdb9" filter="url(#bl2)"/>
<polygon points="190.8,0 196,0 192,238.5 187,238.5" fill="#c6c8c4"/>
<rect x="198" y="74.2" width="52.5" height="57.4" fill="#767d66"/>
<polygon points="198,74.2 250.5,74.2 250.5,81 228,88 212,82 198,86" fill="#c3c5be"/>
<rect x="231" y="84" width="19" height="40" fill="#858b74"/><path d="M200 92h48M200 100h48M200 110h48M200 120h48M210 86v44M222 86v44M236 86v44M244 86v44" stroke="#5d6450" stroke-width=".8"/><rect x="244" y="108" width="6" height="9" fill="#d0d0cc"/>
<rect x="198" y="96" width="18" height="30" fill="#666d57"/>
<path d="M206.5 131.6c-.5-12 1-22 6-26l8-2.5c5 1 8 4 9.5 8l-2.5 6-3.5-2-1 16.5z" fill="#b3241d"/>
<ellipse cx="219.5" cy="99.5" rx="4.6" ry="4.8" fill="#3a2a22"/><path d="M222 102l5-3 2 3-4 5z" fill="#b98a6a"/>
<polygon points="196,133 270.6,135 270.6,174.6 196,173" fill="#a6a6a0"/>
<polygon points="250,135 270.6,135 270.6,174 256,174" fill="#b3b6c1"/>
<ellipse cx="234" cy="156.6" rx="29.4" ry="18" fill="#dcdcdc"/><ellipse cx="234" cy="158.5" rx="25.5" ry="14" fill="#999ca1"/>
<path d="M220 152l4 6M228 162l8 4M244 150l6 5M230 150l3 3" stroke="#c9ccd0" stroke-width="1.6"/>
<path d="M235.5 148v15" stroke="#c02020" stroke-width="1"/><circle cx="235.5" cy="163" r="1.3" fill="#c02020"/>
<circle cx="255.5" cy="139.5" r="1.8" fill="#c9a030"/><circle cx="218" cy="136" r="1.5" fill="#b98a30"/>
<polygon points="202.7,179.4 278.5,181 278.5,221 202.7,221" fill="#8a8c87"/>
<polygon points="202.7,179.4 225,180 225,221 202.7,221" fill="#70726d"/>
<circle cx="239.7" cy="200.2" r="12.3" fill="#2a2a2a"/><circle cx="239.7" cy="200.2" r="9.8" fill="#9a9c9f"/><path d="M239.7 200.2l1-6" stroke="#333" stroke-width=".8"/>
<polygon points="229,209 269,209 271,218.5 231,218.5" fill="#a9aba7"/>
<rect x="201" y="215" width="81" height="6.5" fill="#1a1a1a"/>
<polygon points="196,175 208.5,175 208.5,183.5 200,181" fill="#1d1d14"/><polygon points="203,175 208.5,175 208.5,183" fill="#d2ca20"/>
<polygon points="270.6,178 278,175 283.5,181 275,185" fill="#d8d022"/>
<polygon points="270.6,215 282,215 282,222.5 270.6,222.5" fill="#1a1a12"/><polygon points="270.6,215 270.6,222.5 279,222.5" fill="#d8d022"/>
<polygon points="199,216 213,214.5 212,224 202,222.5" fill="#161616"/>
<polygon points="286.7,78 334.4,79.5 334.4,133.5 286.7,132" fill="#b4b6b2"/>
<polygon points="309,79 334,80 334,121 309,118" fill="#4c55a8"/>
<polygon points="287,115 302,113 302,131 287,131" fill="#4a52a0"/>
<polygon points="300,117 334,121 334,133 292,132" fill="#5c6062"/>
<path d="M288 84h12M289 87h10" stroke="#6a6c6a" stroke-width="1"/><path d="M287.5 88v9" stroke="#333" stroke-width="1"/>
<rect x="303" y="82.5" width="12" height="5.5" rx="1" fill="#b5a23c"/>
<rect x="299.4" y="88" width="20.5" height="25" rx="2.5" fill="#3c3636"/><rect x="301.8" y="90.5" width="15.5" height="20" rx="1.5" fill="#9d8c86"/>
<rect x="304" y="113" width="10" height="8" fill="#777a7c"/>
<polygon points="301.3,142.4 369.5,146 368.5,184.5 300,181" fill="#a2a296" stroke="#c9c9c1" stroke-width=".8"/>
<circle cx="308" cy="155.5" r="2.5" fill="#c63a32"/>
<rect x="305.5" y="158.5" width="5" height="2" fill="#e6e6e0"/>
<circle cx="316.8" cy="155.9" r="2.5" fill="#26282a"/>
<rect x="314.3" y="158.9" width="5" height="2" fill="#e6e6e0"/>
<circle cx="325.6" cy="156.3" r="2.5" fill="#cfc430"/>
<rect x="323.1" y="159.3" width="5" height="2" fill="#e6e6e0"/>
<circle cx="334.4" cy="156.7" r="2.5" fill="#dcdcdc"/>
<rect x="331.9" y="159.7" width="5" height="2" fill="#e6e6e0"/>
<circle cx="343.2" cy="157.1" r="2.5" fill="#d4d4d4"/>
<rect x="340.7" y="160.1" width="5" height="2" fill="#e6e6e0"/>
<rect x="351" y="155.5" width="9" height="4" fill="#2b2b2b"/>
<path d="M305 173l4-6" stroke="#333" stroke-width="1.4"/><rect x="303.5" y="172" width="6" height="1.8" fill="#d8d8d2"/>
<path d="M313.6 173.4l4-6" stroke="#333" stroke-width="1.4"/><rect x="312.1" y="172.4" width="6" height="1.8" fill="#d8d8d2"/>
<path d="M322.2 173.8l4-6" stroke="#333" stroke-width="1.4"/><rect x="320.7" y="172.8" width="6" height="1.8" fill="#c0302a"/>
<path d="M330.8 174.2l4-6" stroke="#333" stroke-width="1.4"/><rect x="329.3" y="173.2" width="6" height="1.8" fill="#c0302a"/>
<path d="M339.4 174.6l4-6" stroke="#333" stroke-width="1.4"/><rect x="337.9" y="173.6" width="6" height="1.8" fill="#c0302a"/>
<path d="M348 175l4-6" stroke="#333" stroke-width="1.4"/><rect x="346.5" y="174" width="6" height="1.8" fill="#d8d8d2"/>
<path d="M356.6 175.4l4-6" stroke="#333" stroke-width="1.4"/><rect x="355.1" y="174.4" width="6" height="1.8" fill="#d8d8d2"/>
<polygon points="432,190 400,204 366,217 432,228" fill="#bfc1bd"/>
<polygon points="426.3,0 556,0 556,238.5 432,238.5 432,130" fill="#3c4038"/>
<rect x="427" y="0" width="129" height="9" fill="#191d17"/>
<polygon points="427,9 556,9 556,46 428.5,36" fill="#484c42"/>
<ellipse cx="444" cy="29" rx="12" ry="6" fill="#7a7e76"/>
<path d="M492 28c4-8 14-8 22 0l24 8" stroke="#141414" stroke-width="1.3" fill="none"/><polygon points="500,34 520,26 545,34 552,44 505,40" fill="#1e201c"/>
<polygon points="429,35.4 556,45.5 556,52.6 429.5,41.7" fill="#80847a"/>
<polygon points="429.5,41.7 556,52.6 556,62 430,56" fill="#1f231d"/>
<polygon points="430,56 556,62 556,104 432,98" fill="#4c5046"/>
<ellipse cx="475" cy="78" rx="42" ry="12" fill="#5a5e54" filter="url(#bl2)"/>
<polygon points="463,92 500,88 556,90 556,102 470,99" fill="#181a16"/>
<polygon points="431.8,97.3 556,103 556,110.7 431.8,106.2" fill="#7c8075"/>
<polygon points="431.8,106.2 556,110.7 556,120 431.8,116" fill="#23271e"/>
<polygon points="431.8,116 556,120 556,163 431.8,163" fill="#54584d"/>
<polygon points="432,118.5 478,120 478,127 432,126.5" fill="#898d83"/>
<polygon points="516,161.8 556,163 556,170 516,169.5" fill="#858980"/>
<rect x="500" y="170" width="56" height="24" fill="#3a3e36"/>
<rect x="432" y="194" width="124" height="45" fill="#262824"/>
<path d="M505 196c10-4 20 2 30-1s14 3 21 0" stroke="#111" stroke-width="2" fill="none"/>
<rect x="506" y="210" width="32" height="17.5" fill="#0f0f0f"/>
<rect x="538" y="207" width="18" height="6" fill="#9c9c9a"/>
<rect x="432" y="229" width="124" height="10" fill="#5a5a58"/>
<path d="M440 233h70M515 232l40-3" stroke="#8a8a88" stroke-width="1.2"/>
<polygon points="470,9 556,9 556,44 520,40" fill="#1c201a" opacity=".75"/>
<rect x="480" y="0" width="76" height="165" fill="url(#vg)"/>
<rect x="496" y="125.7" width="15.5" height="4.5" fill="#6c6e72"/><rect x="495" y="129.8" width="18" height="16.5" rx="1.5" fill="#2f1b50"/>
<path d="M418.4 175.7L434.2 175.7L434.2 192.1L419.1 190.8Z" fill="#c9cbc7"/>
<path d="M434.8 186.6Q436.2 178.4 448.5 177.1L462.2 178.4L462.2 226.3L434.8 226.3Z" fill="url(#armg)"/>
<path d="M434.8 194.2L462.2 194.2L462.2 203.1L434.8 203.1Z" fill="#a3a3a1"/>
<path d="M447.2 210.6L456.7 210.6L456.7 218.1L447.2 218.1Z" fill="#8f918f"/>
<path d="M489.6 144.9Q506 142.2 515.6 149.7Q522.4 157.9 514.2 167.5Q503.3 175.7 478.6 175.4L473.2 164.7L484.1 155.2Z" fill="url(#armg)"/>
<path d="M489.6 145.3L500.8 145.9L497.8 163.7L485.8 162.7Z" fill="#9a9a98"/>
<path d="M426 159L470.4 157.9Q478.6 164.7 470.4 174.1L426.6 175.4Q418.2 174.3 418.2 167.2Q418.4 160 426 159Z" fill="url(#armg)"/>
<path d="M433.5 175.4L473.2 174.1L466.3 181.2L436.2 181.2Z" fill="#8c8e88"/>
<path d="M419.1 149.7L439 149L439.6 158.6L419.1 159.3Z" fill="#b9bab6"/>
<path d="M426.6 151.1L437.6 150.8L437.9 157.9L427.3 158.2Z" fill="#8e908b"/>
<path d="M424.6 135.3L452.6 134.4L456.7 148.3L425.3 149.7Q417.3 148.3 417.7 142.2Q418.4 136.3 424.6 135.3Z" fill="url(#armg)"/>
<path d="M442.8 134.6L446.5 134.6L448.5 148.3L444.7 148.9Z" fill="#8a8a88"/>
<path d="M462.2 129.2L485.5 128.9Q496.4 131.9 494.4 140.8L491 144.2Q492.3 151.1 484.1 157.2Q475.9 162 467.7 156.5L454.7 143.5Q449.9 134 462.2 129.2Z" fill="#ecece9"/>
<path d="M454.7 143.5L467.7 156.5Q475.9 162 484.1 157.2L486.9 153.8Q473.2 155.2 459.5 140.8Z" fill="#c4c4c1"/>
<path d="M463.2 225L463.2 192.1Q465 181.9 478.6 181.9L492.3 181.9Q504 183.2 504 194.9L504 225Z" fill="#e0e0de"/>
<path d="M482.8 186.6Q489.6 182.5 500.5 186.6L503.6 205.8Q492.3 214 482.8 207.2Z" fill="#b3b3b1"/>
<circle cx="493" cy="190.8" r="5.6" fill="#141414"/><circle cx="492.4" cy="203" r="4.2" fill="#181818"/>
<path d="M463.2 197.6L472.5 197.6L472.5 204.4L463.2 204.4Z" fill="#9a9c9e"/>
<polygon points="382,239 396,227 432,229 556,229 556,239" fill="#5f5f5d"/>
<polygon points="313.6,239 346.8,217.3 364,219.2 396,227 382,239" fill="#343434"/>
<path d="M322 236l26-15M334 237l24-15M348 238l20-14" stroke="#4a4a4a" stroke-width="1.6"/>
<path d="M405.5 229v10" stroke="#b03020" stroke-width="1"/>
<polygon points="404,222 462,222 462,228 410,228" fill="#d2d2d0"/>
</g>
<g font-family="DejaVu Sans Mono,Liberation Mono,monospace" font-weight="bold" font-size="12.8">
<g fill="#f6f6f6" stroke="#2e2e2e" stroke-width=".9" style="paint-order:stroke"><text x="18.4" y="23.9" letter-spacing="1.53">02-21-202</text><text x="186.8" y="23.9">1</text></g>
<g fill="#161616"><text x="101.5" y="23.9">4</text><text x="195.8" y="23.9" letter-spacing="1.3">1:50:35</text></g>
</g>
<text x="122" y="24.5" font-family="Noto Sans CJK SC,WenQuanYi Zen Hei,sans-serif" font-size="15" font-weight="500" fill="#f2f2ee" stroke="#f2f2ee" stroke-width=".12" letter-spacing="3.2">星期<tspan fill="#2c2c2a" stroke="none">三</tspan></text>
<text x="405" y="224.3" font-family="DejaVu Serif,Liberation Serif,serif" font-weight="bold" font-size="13" fill="#141414" stroke="#e4e4e4" stroke-width="1.2" style="paint-order:stroke" textLength="81.5" lengthAdjust="spacingAndGlyphs">Camera 01</text>
</g></svg>
<svg style="left:1063px;top:415px" width="28" height="28" viewBox="0 0 28 28"><g fill="none" stroke="#222" stroke-width="2" stroke-linejoin="round" stroke-linecap="round"><path d="M5.300 3.300H19l5.700 5.700V22.600a2 2 0 0 1-2 2H5.300a2 2 0 0 1-2-2V5.300A2 2 0 0 1 5.300 3.300z"/><path d="M8.600 3.600v3.800h5.600V3.600"/><path d="M8.300 14.500h11.200M8.300 19.200h6" stroke-width="1.900"/></g></svg>
<svg style="left:1131px;top:415px" width="26" height="28" viewBox="0 0 26 28"><g fill="none" stroke="#222" stroke-width="1.900" stroke-linejoin="round" stroke-linecap="round"><path d="M9.800 6a2.900 2.900 0 0 1 5.800 0V16.500a5.200 5.200 0 1 1-5.800 0z"/><circle cx="12.700" cy="20.700" r="1.600"/></g><path d="M12.700 11.500v8" stroke="#222" stroke-width="1.700"/></svg>
<svg style="left:1192px;top:416px" width="28" height="26" viewBox="0 0 28 26"><rect x="3" y="3.600" width="22.300" height="18.200" fill="none" stroke="#222" stroke-width="2"/><path d="M7.700 12.300V8.200h4.500M20.800 13.400v4.100h-4.500" fill="none" stroke="#222" stroke-width="1.800"/></svg>
<span class="t" style="left:1258.500px;top:417.500px;width:24px;text-align:center;font-size:18.500px;line-height:22px;height:22px;color:#151515">0</span>
<svg style="left:1312px;top:415px" width="28" height="28" viewBox="0 0 28 28"><circle cx="13.650" cy="13.650" r="11.200" fill="none" stroke="#222" stroke-width="1.700"/><circle cx="13.650" cy="13.650" r="3.100" fill="#222"/></svg>
<svg style="left:1374px;top:416px" width="28" height="27" viewBox="0 0 28 27"><g fill="none" stroke="#222" stroke-linecap="round"><circle cx="14" cy="13.800" r="6.200" stroke-width="1.900"/><circle cx="14" cy="13.800" r="2.400" stroke-width="1.700"/><path d="M7 5.600A10.800 10.800 0 0 1 24.500 11M24 18A10.800 10.800 0 0 1 4 18.200" stroke-width="1.700"/><path d="M24.700 3.600v7.400h-1.500M3.500 13.800v7" stroke-width="1.700"/></g></svg>
<div style="left:1016.300px;top:413px;width:1px;height:17px;border-left:1px dotted #c4c4c4"></div>
<div style="left:1028.2px;top:468.2px;width:555.5px;height:260.2px;border:1px solid #d2d2d2;border-radius:2px"></div>
<div class="kb" style="left:1047.5px;top:487.8px;width:27.800px;height:27.800px"></div>
<svg style="left:1047.5px;top:487.8px" width="28" height="27" viewBox="0 0 28 27"><path d="M14 7.300V20.300M7.400 13.800H20.600" stroke="#2a2a2a" stroke-width="3" stroke-linecap="round" fill="none"/></svg>
<div class="kb" style="left:1167.2px;top:487.8px;width:27.800px;height:27.800px"></div>
<svg style="left:1167.2px;top:487.8px" width="28" height="27" viewBox="0 0 28 27"><path d="M7.400 13.800H20.600" stroke="#2a2a2a" stroke-width="3" stroke-linecap="round" fill="none"/></svg>
<div class="kb" style="left:1103px;top:515.2px;width:37px;height:37.400px"></div>
<svg style="left:1103px;top:515.2px" width="37" height="37.400" viewBox="0 0 37 37.400"><path d="M18.500 12.400L28.400 22H8.600z" transform="rotate(0 18.500 18.700)" stroke="#2a2a2a" stroke-width="2.900" stroke-linejoin="round" fill="none"/></svg>
<div class="kb" style="left:1057px;top:561px;width:37px;height:37.400px"></div>
<svg style="left:1057px;top:561px" width="37" height="37.400" viewBox="0 0 37 37.400"><path d="M18.500 12.400L28.400 22H8.600z" transform="rotate(-90 18.500 18.700)" stroke="#2a2a2a" stroke-width="2.900" stroke-linejoin="round" fill="none"/></svg>
<div class="kb" style="left:1149.3px;top:561px;width:37px;height:37.400px"></div>
<svg style="left:1149.3px;top:561px" width="37" height="37.400" viewBox="0 0 37 37.400"><path d="M18.500 12.400L28.400 22H8.600z" transform="rotate(90 18.500 18.700)" stroke="#2a2a2a" stroke-width="2.900" stroke-linejoin="round" fill="none"/></svg>
<div class="kb" style="left:1103px;top:607.3px;width:37px;height:37.400px"></div>
<svg style="left:1103px;top:607.3px" width="37" height="37.400" viewBox="0 0 37 37.400"><path d="M18.500 12.400L28.400 22H8.600z" transform="rotate(180 18.500 18.700)" stroke="#2a2a2a" stroke-width="2.900" stroke-linejoin="round" fill="none"/></svg>
<div class="kb" style="left:1047.5px;top:626px;width:27.800px;height:27.800px"></div>
<svg style="left:1047.5px;top:626px" width="28" height="27" viewBox="0 0 28 27"><path d="M14 7.300V20.300M7.400 13.800H20.600" stroke="#2a2a2a" stroke-width="3" stroke-linecap="round" fill="none"/></svg>
<div class="kb" style="left:1167.2px;top:626px;width:27.800px;height:27.800px"></div>
<svg style="left:1167.2px;top:626px" width="28" height="27" viewBox="0 0 28 27"><path d="M7.400 13.800H20.600" stroke="#2a2a2a" stroke-width="3" stroke-linecap="round" fill="none"/></svg>
<div style="left:1038px;top:670.700px;width:13.200px;height:13.200px;background:#fafafa;border:1px solid #bdbdbd;border-radius:2px"></div>
<svg style="left:1038px;top:670.700px" width="13.200" height="13.200" viewBox="0 0 13.200 13.200"><path d="M3.300 6.600l2.400 3.200 4.300-6.400" stroke="#1d1d1d" stroke-width="1.300" fill="none"/></svg>
<span class="t" style="left:1056.2px;top:671.200px">Publish</span>
<span class="t" style="left:1124.4px;top:667px;font-size:14.600px;line-height:18px;height:18px">Hz</span>
<div class="inp" style="left:1148px;top:663.300px;width:50.800px;height:26px;background:#f0f0f0;border-color:#cbcbcb;border-bottom-color:#c2c2c2;border-radius:3.500px"></div>
<div style="left:1185.200px;top:664.300px;width:1px;height:24px;background:#cdcdcd"></div>
<span class="t" style="left:1153.3px;top:671.200px">10</span>
<svg style="left:1186px;top:664px" width="12" height="24" viewBox="0 0 12 24"><path d="M2 9.600L5.300 5.800l3.300 3.800zM2 16L5.300 19.700l3.300-3.700z" fill="#505050"/></svg>
<span class="t" style="left:1072.5px;top:694.200px">PTZ</span>
<div class="btn" style="left:1121.200px;top:690.400px;width:74.600px;height:19.400px;background:#f0f0f0;border-color:#c6c6c6;border-bottom-color:#b4b4b4;border-radius:3.500px"></div>
<span class="t" style="left:1125.3px;top:694.200px">cam1</span>
<svg style="left:1180px;top:696px" width="10" height="8" viewBox="0 0 10 8"><path d="M2 2.300h6.600L5.300 5.700z" fill="#505050"/></svg>
<span class="t" style="left:1218.400px;top:483.3px">P:</span>
<div class="inp" style="left:1235.400px;top:478.2px;width:164.400px;height:21.600px;border-radius:3px;background:#f1f1f1;border-color:#c9c9c9"></div>
<span class="t ph" style="left:1238.5px;top:483.1px;font-size:10.5px;letter-spacing:.35px">(-180~180◦)</span>
<span class="t" style="left:1218.400px;top:552.4px">T:</span>
<div class="inp" style="left:1235.400px;top:547.3px;width:164.400px;height:21.600px;border-radius:3px;background:#f1f1f1;border-color:#c9c9c9"></div>
<span class="t ph" style="left:1238.5px;top:552.2px;font-size:10.5px;letter-spacing:.35px">(-25~90◦)</span>
<span class="t" style="left:1218.400px;top:622.6px">Z:</span>
<div class="inp" style="left:1235.400px;top:617.5px;width:164.400px;height:21.600px;border-radius:3px;background:#f1f1f1;border-color:#c9c9c9"></div>
<span class="t ph" style="left:1238.5px;top:622.4px;font-size:10.5px;letter-spacing:.35px">(1~20)</span>
<div class="btn" style="left:1245.5px;top:646px;width:74px;height:20.700px"></div>
<span class="t" style="left:1245.5px;top:649.900px;width:74px;text-align:center">request</span>
<div class="btn" style="left:1325px;top:646px;width:73.500px;height:20.700px"></div>
<span class="t" style="left:1325px;top:649.900px;width:73.500px;text-align:center">reset</span>
<div style="left:1404px;top:478.800px;width:169px;height:214px;border:1px solid #cfcfcf"></div>
<svg style="left:1404px;top:478px" width="170" height="215" viewBox="0 0 170 215">
<defs><linearGradient id="cy" x1="0" y1="0" x2="1" y2="0"><stop offset="0" stop-color="#c2c2c2"/><stop offset=".25" stop-color="#e4e4e4"/><stop offset=".6" stop-color="#d6d6d6"/><stop offset="1" stop-color="#bcbcbc"/></linearGradient><filter id="sb" x="-5%" y="-5%" width="110%" height="110%"><feGaussianBlur stdDeviation=".5"/></filter></defs>
<g filter="url(#sb)">
<path d="M48.63 102.26L48.63 175.95Q88.11 191.74 127.58 175.95L127.58 75.95Q126.26 62.79 106.53 58.84L82.84 60.16L80.21 102.26Z" fill="url(#cy)"/>
<path d="M80.74 93.05L84.16 62.79Q106.53 56.21 125.47 72L126.26 89.11Q101.26 94.89 80.74 93.05Z" fill="#dedede"/>
<path d="M80.74 93.32Q101.26 95.42 126.79 89.63" stroke="#8a8a8a" stroke-width=".9" fill="none"/>
<path d="M48.63 145.68Q88.11 157.53 127.58 145.68" stroke="#6e6e6e" stroke-width="1" fill="none"/>
<path d="M48.63 150.16Q88.11 162 127.58 150.16" stroke="#9a9a9a" stroke-width="1" fill="none"/>
<path d="M52.58 137.79Q74.95 144.37 101.26 140.42" stroke="#f4f4f4" stroke-width="2.2" fill="none"/>
<path d="M55.21 165.42Q61.79 168.05 72.32 167.53M103.89 165.42L114.42 164.37" stroke="#f2f2f2" stroke-width="1.6" fill="none"/>
<path d="M50.74 107.53L80.21 112.79L79.68 125.42Q64.42 125.95 51.26 116.74Z" fill="#7c7c7c"/>
<path d="M57.84 114.11L79.68 117.53L79.68 125.42Q67.05 124.63 57.84 118.58Z" fill="#5a5a5a"/>
<path d="M47.32 94.37L55.21 61.47Q61.79 50.95 74.95 53.58L93.37 56.21L86.79 68.05L80.21 83.84L79.68 110.16L57.84 106.21Z" fill="#e2e2e2"/>
<path d="M74.95 53.58L93.89 55.42L85.47 70.68L79.68 87.79L74.95 83.84Z" fill="#c9c9c9"/>
<ellipse cx="67.58" cy="66.74" rx="8.2" ry="12" transform="rotate(14 67.58 66.74)" fill="#0e0e0e"/>
<ellipse cx="69.68" cy="67.53" rx="3.2" ry="7" transform="rotate(14 69.68 67.53)" fill="#3c3c3c"/>
<ellipse cx="60.74" cy="95.95" rx="6.6" ry="8.2" transform="rotate(14 60.74 95.95)" fill="#101010"/>
<ellipse cx="52.05" cy="82.53" rx="3.2" ry="4.6" fill="#8c8c8c"/><ellipse cx="68.63" cy="83.32" rx="2.8" ry="3.8" fill="#8a8a8a"/><circle cx="63.11" cy="83.05" r="1.1" fill="#444"/>
<path d="M72.32 102.26l5 2.5" stroke="#333" stroke-width="1.6"/><path d="M82.84 58.05l5 1" stroke="#555" stroke-width="1.4"/>
</g>
<path d="M37.58 155.68C14.42 133.84 14.42 86.47 48.63 60.95" stroke="#1fbf1f" stroke-width="1.2" fill="none"/>
<path d="M53.89 57L44.95 59.63L50.47 64.63Z" fill="#1fbf1f"/>
<path d="M20.47 94.89C6.53 107.53 24.95 136.47 106 128.58" stroke="#e01b1b" stroke-width="1.2" fill="none"/>
<path d="M112.58 127.79L104.42 124.11L105.47 132.26Z" fill="#e01b1b"/>
<path d="M35.47 55.42h7.6M39.29 51.61v7.6" stroke="#1fbf1f" stroke-width="1.3"/>
<path d="M36.79 148.05h5.5" stroke="#1fbf1f" stroke-width="1.3"/>
<path d="M9.16 89.89h5.5" stroke="#e01b1b" stroke-width="1.4"/>
<path d="M117.84 133.84h7.6M121.66 130.03v7.6" stroke="#e01b1b" stroke-width="1.3"/>
<g font-family="DejaVu Sans,Liberation Sans,sans-serif" font-weight="bold" font-size="17.5" fill="#141414"><text x="35.47" y="45.16" textLength="29.5" lengthAdjust="spacingAndGlyphs">Tilt</text><text x="116.53" y="123.32" textLength="34.8" lengthAdjust="spacingAndGlyphs">Pan</text></g>
</svg>
<span class="t" style="left:1438.5px;top:697.500px;font-size:15.600px;line-height:20px;height:20px">Schematic</span>
<!-- yellow pointer -->
<div style="left:1169.200px;top:782px;width:50px;height:50px;border-radius:50%;background:#d9cd13"></div>

</body></html>
